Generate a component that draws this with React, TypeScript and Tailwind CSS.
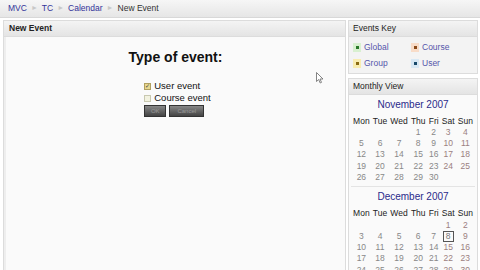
import React from "react";

const nov: (number | null)[][] = [
  [null, null, null, 1, 2, 3, 4],
  [5, 6, 7, 8, 9, 10, 11],
  [12, 13, 14, 15, 16, 17, 18],
  [19, 20, 21, 22, 23, 24, 25],
  [26, 27, 28, 29, 30, null, null],
];
const dec: (number | null)[][] = [
  [null, null, null, null, null, 1, 2],
  [3, 4, 5, 6, 7, 8, 9],
  [10, 11, 12, 13, 14, 15, 16],
  [17, 18, 19, 20, 21, 22, 23],
  [24, 25, 26, 27, 28, 29, 30],
];
const days = ["Mon", "Tue", "Wed", "Thu", "Fri", "Sat", "Sun"];

function Month({ title, rows, today }: { title: string; rows: (number | null)[][]; today?: number }) {
  return (
    <div className="flex flex-col items-center">
      <div className="text-[10px] text-[#2b2b8a] leading-[12px] mt-[4px] mb-[5px]">{title}</div>
      <table className="border-collapse text-[8.5px] leading-[11.3px]">
        <thead>
          <tr>
            {days.map((d) => (
              <th key={d} className="font-normal text-[#222] px-[1.6px] text-center">{d}</th>
            ))}
          </tr>
        </thead>
        <tbody>
          {rows.map((r, i) => (
            <tr key={i}>
              {r.map((n, j) => (
                <td key={j} className={"text-center " + (j >= 5 ? "text-[#9a8080]" : "text-[#888]")}>
                  {n === today ? (
                    <span className="inline-block border border-[#555] px-[2px] leading-[9px] text-[#777]">{n}</span>
                  ) : (
                    n ?? ""
                  )}
                </td>
              ))}
            </tr>
          ))}
        </tbody>
      </table>
    </div>
  );
}

function KeyItem({ color, bg, label }: { color: string; bg: string; label: string }) {
  return (
    <div className="flex items-center gap-[3px] w-[58px]">
      <span className={"w-[8px] h-[9px] flex items-center justify-center " + bg}>
        <span className={"w-[3px] h-[3px] " + color} />
      </span>
      <span className="text-[8.5px] text-[#5555aa]">{label}</span>
    </div>
  );
}

export default function App() {
  return (
    <div
      className="w-[480px] h-[270px] overflow-hidden bg-white relative"
      style={{ fontFamily: '"Liberation Sans", Arial, sans-serif' }}
    >
      <div className="h-[18px] bg-gradient-to-b from-[#f6f6f6] to-[#e6e6e6] border-b border-[#d8d8d8] flex items-center px-[8px] gap-[4px] text-[8.5px]">
        <span className="text-[#33339a]">MVC</span>
        <span className="text-[#c8c8c8] text-[7px]">►</span>
        <span className="text-[#33339a]">TC</span>
        <span className="text-[#c8c8c8] text-[7px]">►</span>
        <span className="text-[#33339a]">Calendar</span>
        <span className="text-[#c8c8c8] text-[7px]">►</span>
        <span className="text-[#333]">New Event</span>
      </div>
      <div className="flex pt-[2px]">
        <div className="w-[343px] ml-[3px] h-[260px] border border-[#dcdcdc] flex flex-col">
          <div className="h-[16px] bg-gradient-to-b from-[#f4f4f4] to-[#e4e4e4] border-b border-[#dcdcdc] flex items-center px-[5px] text-[8.5px] font-bold text-[#222]">
            New Event
          </div>
          <div className="flex-1 bg-[#fafafa] flex flex-col items-center border-l-[2px] border-[#eee]">
            <div className="text-[14px] font-bold text-[#111] mt-[12px] leading-[16px]">Type of event:</div>
            <div className="flex flex-col mt-[15px] ml-[4px] text-[9.5px] text-[#111] leading-[12px]">
              <div className="flex items-center gap-[3px]">
                <span className="w-[7px] h-[7px] bg-[#e8d890] border border-[#b0a060] flex items-center justify-center text-[6px] leading-none text-[#444]">✓</span>
                User event
              </div>
              <div className="flex items-center gap-[3px]">
                <span className="w-[7px] h-[7px] bg-[#f2f2e0] border border-[#c8c8b0]" />
                Course event
              </div>
              <div className="flex gap-[3px] mt-[1px]">
                <span className="w-[22px] h-[12px] bg-gradient-to-b from-[#888] to-[#444] border border-[#333] text-[6px] text-[#999] flex items-center justify-center">OK</span>
                <span className="w-[35px] h-[12px] bg-gradient-to-b from-[#888] to-[#444] border border-[#333] text-[6px] text-[#999] flex items-center justify-center">Cancel</span>
              </div>
            </div>
          </div>
        </div>
        <div className="w-[130px] ml-[2px] flex flex-col">
          <div className="border border-[#dcdcdc]">
            <div className="h-[16px] bg-gradient-to-b from-[#f4f4f4] to-[#e4e4e4] border-b border-[#dcdcdc] flex items-center px-[4px] text-[8.5px] text-[#222]">
              Events Key
            </div>
            <div className="bg-[#f3f3f3] px-[4px] pt-[4px] pb-[3px] flex flex-col gap-[3px]">
              <div className="flex">
                <KeyItem color="bg-[#2a7a2a]" bg="bg-[#d8f0d0]" label="Global" />
                <KeyItem color="bg-[#8a4a1a]" bg="bg-[#f8dcc8]" label="Course" />
              </div>
              <div className="flex">
                <KeyItem color="bg-[#8a6a10]" bg="bg-[#f8ecb0]" label="Group" />
                <KeyItem color="bg-[#1a4a6a]" bg="bg-[#d8e8f4]" label="User" />
              </div>
            </div>
          </div>
          <div className="border border-[#dcdcdc] mt-[4px] flex-1">
            <div className="h-[16px] bg-gradient-to-b from-[#f4f4f4] to-[#e4e4e4] border-b border-[#dcdcdc] flex items-center px-[4px] text-[8.5px] text-[#222]">
              Monthly View
            </div>
            <div className="bg-[#fafafa]">
              <Month title="November 2007" rows={nov} />
              <div className="border-t border-[#e4e4e4] mx-[2px] mt-[3px]" />
              <Month title="December 2007" rows={dec} today={8} />
            </div>
          </div>
        </div>
      </div>
      <svg className="absolute left-[316px] top-[72px]" width="8" height="12" viewBox="0 0 8 12">
        <path d="M0.5 0.5 L0.5 9.5 L2.7 7.5 L4.2 11 L5.5 10.4 L4 7 L7 7 Z" fill="white" stroke="#666" strokeWidth="0.8" />
      </svg>
    </div>
  );
}
